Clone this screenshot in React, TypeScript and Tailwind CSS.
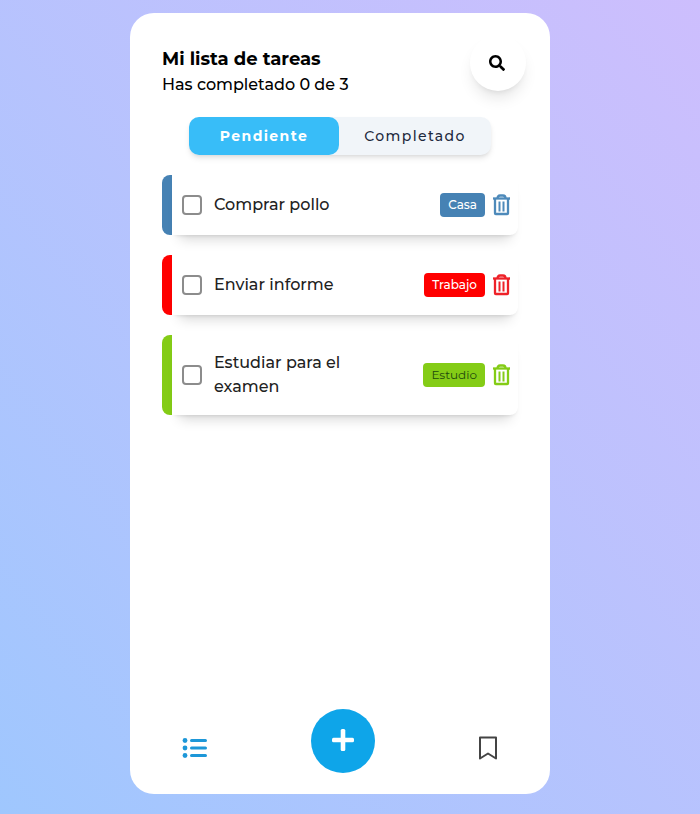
import { useState } from "react";

type Task = {
  id: number;
  text: string;
  tag: string;
  bar: string;
  chip: string;
  icon: string;
};

const tasks: Task[] = [
  { id: 1, text: "Comprar pollo", tag: "Casa", bar: "bg-[#4682b4]", chip: "bg-[#4682b4] font-medium text-white", icon: "text-[#4e8aba]" },
  { id: 2, text: "Enviar informe", tag: "Trabajo", bar: "bg-[#ff0000]", chip: "bg-[#ff0000] font-medium text-white", icon: "text-[#ee2229]" },
  { id: 3, text: "Estudiar para el examen", tag: "Estudio", bar: "bg-[#84cc16]", chip: "bg-[#84cc16] text-[#1f4a0c]", icon: "text-[#84cc16]" },
];

function TrashIcon() {
  return (
    <svg viewBox="0 0 17 22" className="h-[22px] w-[17px]" fill="none" stroke="currentColor" strokeWidth="2.300" aria-hidden="true">
      <path d="M0 4.500h17" />
      <path d="M4.500 4.500c0-2 1-3 2.500-3h3c1.500 0 2.500 1 2.500 3" />
      <path d="M2 4.500v14.700c0 .5.300.800.800.800h11.400c.5 0 .8-.3.8-.8V4.500" />
      <path d="M6.500 7.500v10M10.500 7.500v10" strokeWidth="2" />
    </svg>
  );
}

function SearchIcon() {
  return (
    <svg viewBox="0 0 512 512" className="size-4" fill="currentColor" aria-hidden="true">
      <path d="M505 442.700 405.300 343c-4.500-4.500-10.600-7-17-7H372c27.600-35.300 44-79.700 44-128C416 93.100 322.900 0 208 0S0 93.100 0 208s93.100 208 208 208c48.300 0 92.700-16.400 128-44v16.300c0 6.400 2.500 12.500 7 17l99.700 99.700c9.400 9.400 24.600 9.400 33.900 0l28.300-28.300c9.400-9.400 9.400-24.600.1-34zM208 336c-70.700 0-128-57.200-128-128 0-70.700 57.200-128 128-128 70.700 0 128 57.200 128 128 0 70.700-57.200 128-128 128z" />
    </svg>
  );
}

function ListIcon() {
  return (
    <svg viewBox="0 0 26 20" className="h-5 w-[26px]" stroke="currentColor" strokeWidth="3" strokeLinecap="round" aria-hidden="true">
      <path d="M9.500 2.500h14M9.500 10h14M9.500 17.500h14" />
      <g fill="currentColor" stroke="none">
        <circle cx="3" cy="2.500" r="2.400" />
        <circle cx="3" cy="10" r="2.400" />
        <circle cx="3" cy="17.500" r="2.400" />
      </g>
    </svg>
  );
}

function PlusIcon() {
  return (
    <svg viewBox="0 0 24 26" className="h-[26px] w-6" fill="currentColor" aria-hidden="true">
      <rect x="9.700" y="1" width="4.600" height="22" rx="1.500" />
      <rect x="1" y="9.700" width="22" height="4.600" rx="1.500" />
    </svg>
  );
}

function BookmarkIcon() {
  return (
    <svg viewBox="0 0 20 24" className="h-6 w-5" fill="none" stroke="currentColor" strokeWidth="2" strokeLinejoin="round" aria-hidden="true">
      <path d="M2 1.500h16V22.500l-8-5-8 5z" />
    </svg>
  );
}

export default function App() {
  const [done, setDone] = useState<number[]>([]);
  const toggle = (id: number) =>
    setDone((prev) => (prev.includes(id) ? prev.filter((item) => item !== id) : [...prev, id]));

  return (
    <div className="flex min-h-screen justify-center bg-linear-to-tr from-[#9fc7fe] to-[#cdbefd] pt-[13px] pr-9 pb-5 pl-4 font-['Montserrat','Inter',sans-serif] text-black">
      <main className="flex w-full max-w-[420px] flex-col rounded-3xl bg-white px-8 pt-[22px] pb-[21px]">
        <header className="flex items-start justify-between">
          <div className="pt-[10px]">
            <h1 className="text-lg leading-7 font-bold">Mi lista de tareas</h1>
            <p className="text-base leading-6 font-medium">Has completado {done.length} de {tasks.length}</p>
          </div>
          <button type="button" aria-label="Buscar" className="-mr-2 flex size-14 items-center justify-center rounded-full pr-0.5 shadow-lg">
            <SearchIcon />
          </button>
        </header>

        <nav className="mx-auto mt-5 flex h-[38px] w-[302px] rounded-[10px] bg-slate-100 text-sm shadow-md">
          <button type="button" className="w-[150px] rounded-[10px] bg-[#38bdf8] font-bold tracking-widest text-white">Pendiente</button>
          <button type="button" className="flex-1 font-medium tracking-widest text-slate-800">Completado</button>
        </nav>

        <ul className="mt-5 flex flex-col gap-5">
          {tasks.map((task) => (
            <li key={task.id} className="flex items-stretch">
              <span className={`w-[10px] shrink-0 rounded-l-lg ${task.bar}`} />
              <div className="flex min-h-[60px] flex-1 items-center rounded-r-lg py-4 pr-2 pl-[10px] shadow-[0_12px_12px_-8px_rgba(0,0,0,0.16),0_3px_4px_-3px_rgba(0,0,0,0.14)]">
                <input
                  id={`task-${task.id}`}
                  type="checkbox"
                  checked={done.includes(task.id)}
                  onChange={() => toggle(task.id)}
                  className="size-5 shrink-0 appearance-none rounded-[4px] border-2 border-[#8c8c8c] checked:border-[#0ea5e9] checked:bg-[#0ea5e9]"
                />
                <label htmlFor={`task-${task.id}`} className="ml-3 max-w-[150px] text-base leading-6 font-medium text-[#222222]">
                  {task.text}
                </label>
                <span className={`ml-auto rounded-sm px-2 text-xs leading-6 ${task.chip}`}>{task.tag}</span>
                <button type="button" aria-label={`Eliminar ${task.text}`} className={`ml-2 ${task.icon}`}>
                  <TrashIcon />
                </button>
              </div>
            </li>
          ))}
        </ul>

        <footer className="mt-auto flex items-end justify-between px-5">
          <button type="button" aria-label="Lista" className="pb-[15px] text-[#1d97d8]">
            <ListIcon />
          </button>
          <button type="button" aria-label="Agregar tarea" className="flex size-16 items-center justify-center rounded-full bg-[#0ea5e9] text-white">
            <PlusIcon />
          </button>
          <button type="button" aria-label="Guardados" className="pb-[13px] text-[#444444]">
            <BookmarkIcon />
          </button>
        </footer>
      </main>
    </div>
  );
}
